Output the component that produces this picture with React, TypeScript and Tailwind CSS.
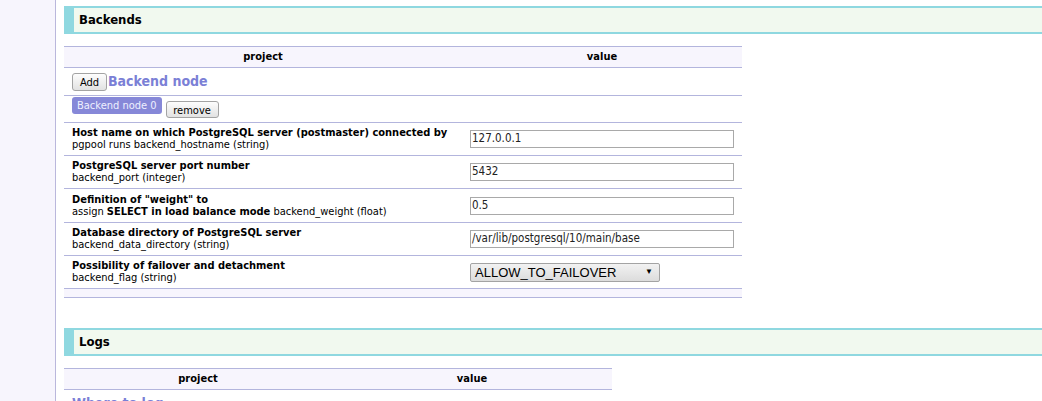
import React from "react";

const font = { fontFamily: '"DejaVu Sans Condensed", "DejaVu Sans", sans-serif' };

function SectionHeader({ title }: { title: string }) {
  return (
    <div className="h-[28px] border-t-2 border-b-2 border-l-[10px] border-[#8fd8e0] bg-[#f1f9ef] pl-[5px] flex items-center">
      <span className="text-[13px] font-bold text-black">{title}</span>
    </div>
  );
}

function TableHead({ col1 }: { col1: string }) {
  return (
    <div className="flex h-[21px] bg-[#f7f5fd] border-b border-[#b3b5dd] items-center text-[11px] font-bold text-black">
      <div className={`${col1} text-center`}>project</div>
      <div className="flex-1 text-center">value</div>
    </div>
  );
}

function NativeButton({ label, cls }: { label: string; cls: string }) {
  return (
    <button
      className={`${cls} border border-[#a3a3a3] rounded-[3px] bg-gradient-to-b from-[#fdfdfd] to-[#e2e2e2] text-[11px] text-black leading-none flex items-center justify-center pt-[1px]`}
      style={font}
    >
      {label}
    </button>
  );
}

function TextInput({ value }: { value: string }) {
  return (
    <div className="w-[264px] h-[18px] border border-[#a9a9a9] bg-white pl-[1px] text-[11.5px] text-[#222] flex items-center leading-none">
      {value}
    </div>
  );
}

function ParamRow({
  h,
  label,
  children,
}: {
  h: string;
  label: React.ReactNode;
  children: React.ReactNode;
}) {
  return (
    <div className={`flex ${h} border-b border-[#b3b5dd] items-center`}>
      <div className="w-[398px] pl-[8px] text-[11px] leading-[12px] text-black">{label}</div>
      <div className="flex-1 pl-[8px] flex items-center">{children}</div>
    </div>
  );
}

export default function App() {
  return (
    <div className="flex h-[401px] overflow-hidden bg-white" style={font}>
      <div className="w-[56px] shrink-0 bg-[#f7f5fd] border-r border-[#bab7dc]" />
      <div className="flex-1 min-w-0 pl-[8px] pt-[6px]">
        <SectionHeader title="Backends" />
        <div className="w-[678px] mt-[12px] border-t border-[#b3b5dd]">
          <TableHead col1="w-[398px]" />
          <div className="flex h-[28px] border-b border-[#b3b5dd] items-start pt-[5px] pl-[8px]">
            <NativeButton label="Add" cls="w-[35px] h-[18px]" />
            <span className="ml-[1px] text-[14px] font-bold text-[#7b80d6] leading-[16px]">Backend node</span>
          </div>
          <div className="flex h-[27px] border-b border-[#b3b5dd] items-start pl-[8px]">
            <span className="mt-[1px] h-[17px] px-[5px] rounded-[3px] bg-[#8688d8] text-[11px] text-[#eef0ff] flex items-center leading-none">
              Backend node 0
            </span>
            <div className="ml-[4px] mt-[5px]">
              <NativeButton label="remove" cls="w-[53px] h-[17px]" />
            </div>
          </div>
          <ParamRow
            h="h-[33px]"
            label={
              <>
                <div className="font-bold">Host name on which PostgreSQL server (postmaster) connected by</div>
                <div>pgpool runs backend_hostname (string)</div>
              </>
            }
          >
            <TextInput value="127.0.0.1" />
          </ParamRow>
          <ParamRow
            h="h-[33px]"
            label={
              <>
                <div className="font-bold">PostgreSQL server port number</div>
                <div>backend_port (integer)</div>
              </>
            }
          >
            <TextInput value="5432" />
          </ParamRow>
          <ParamRow
            h="h-[34px]"
            label={
              <>
                <div className="font-bold">Definition of "weight" to</div>
                <div>
                  assign <span className="font-bold">SELECT in load balance mode</span> backend_weight (float)
                </div>
              </>
            }
          >
            <TextInput value="0.5" />
          </ParamRow>
          <ParamRow
            h="h-[33px]"
            label={
              <>
                <div className="font-bold">Database directory of PostgreSQL server</div>
                <div>backend_data_directory (string)</div>
              </>
            }
          >
            <TextInput value="/var/lib/postgresql/10/main/base" />
          </ParamRow>
          <ParamRow
            h="h-[33px]"
            label={
              <>
                <div className="font-bold">Possibility of failover and detachment</div>
                <div>backend_flag (string)</div>
              </>
            }
          >
            <div
              className="w-[190px] h-[19px] border border-[#a3a3a3] rounded-[2px] bg-gradient-to-b from-[#f2f2f2] to-[#dcdcdc] flex items-center justify-between pl-[4px] pr-[6px] text-[13px] text-black leading-none"
              style={{ fontFamily: '"Liberation Sans", Arial, sans-serif' }}
            >
              <span>ALLOW_TO_FAILOVER</span>
              <span className="text-[8px]">▼</span>
            </div>
          </ParamRow>
          <div className="h-[9px] bg-[#f7f5fd] border-b border-[#b3b5dd]" />
        </div>

        <div className="mt-[30px]">
          <SectionHeader title="Logs" />
        </div>
        <div className="w-[548px] mt-[12px] border-t border-[#b3b5dd]">
          <TableHead col1="w-[268px]" />
          <div className="flex h-[28px] items-start pt-[5px] pl-[8px]">
            <span className="text-[14px] font-bold text-[#7b80d6] leading-[16px]">Where to log</span>
          </div>
        </div>
      </div>
    </div>
  );
}
